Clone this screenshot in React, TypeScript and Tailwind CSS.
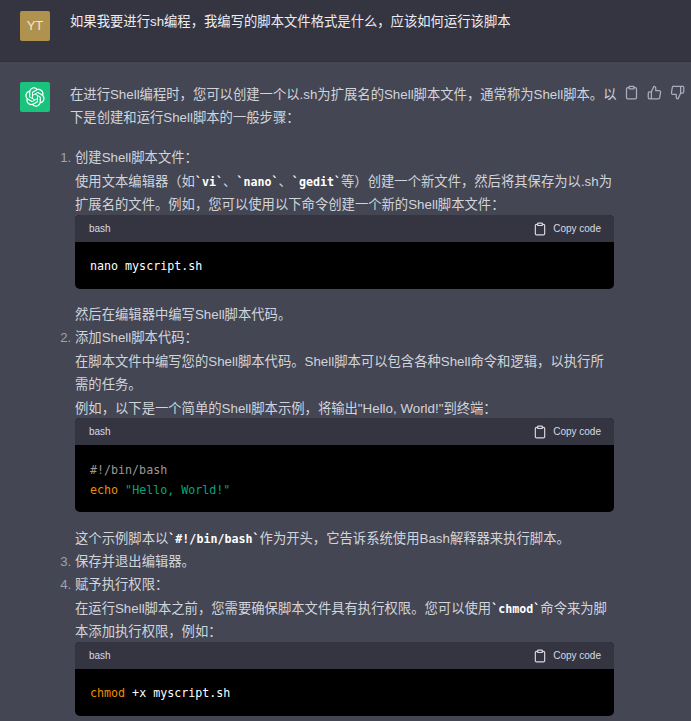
import { Clipboard } from 'lucide-react';
import type { ReactNode } from 'react';

const bodyFont = "font-['Liberation_Sans','Noto_Sans_CJK_SC',sans-serif]";

function OpenAILogo() {
  return (
    <svg viewBox="0 0 41 41" width="20" height="20" fill="none" aria-hidden>
      <path
        fill="currentColor"
        d="M37.5324 16.8707C37.9808 15.5241 38.1363 14.0974 37.9886 12.6859C37.8409 11.2744 37.3934 9.91076 36.676 8.68622C35.6126 6.83404 33.9882 5.3676 32.0373 4.4985C30.0864 3.62941 27.9098 3.40259 25.8215 3.85078C24.8796 2.7893 23.7219 1.94125 22.4257 1.36341C21.1295 0.785575 19.7249 0.491269 18.3058 0.500197C16.1708 0.495044 14.0893 1.16803 12.3614 2.42214C10.6335 3.67624 9.34853 5.44666 8.6917 7.47815C7.30085 7.76286 5.98686 8.3414 4.8377 9.17505C3.68854 10.0087 2.73073 11.0782 2.02839 12.312C0.956464 14.1591 0.498905 16.2988 0.721698 18.4228C0.944492 20.5467 1.83612 22.5449 3.268 24.1293C2.81966 25.4759 2.66413 26.9026 2.81182 28.3141C2.95951 29.7256 3.40701 31.0892 4.12437 32.3138C5.18791 34.1659 6.8123 35.6322 8.76321 36.5013C10.7141 37.3704 12.8907 37.5973 14.9789 37.1492C15.9208 38.2107 17.0786 39.0587 18.3747 39.6366C19.6709 40.2144 21.0755 40.5087 22.4946 40.4998C24.6307 40.5054 26.7133 39.8321 28.4418 38.5772C30.1704 37.3223 31.4556 35.5506 32.1119 33.5179C33.5027 33.2332 34.8167 32.6547 35.9659 31.821C37.115 30.9874 38.0728 29.9178 38.7752 28.684C39.8458 26.8371 40.3023 24.6979 40.0789 22.5748C39.8556 20.4517 38.9639 18.4544 37.5324 16.8707ZM22.4978 37.8849C20.7443 37.8874 19.0459 37.2733 17.6994 36.1501C17.7601 36.117 17.8666 36.0586 17.936 36.0161L25.9004 31.4156C26.1003 31.3019 26.2663 31.137 26.3813 30.9378C26.4964 30.7386 26.5563 30.5124 26.5549 30.2825V19.0542L29.9213 20.998C29.9389 21.0068 29.9541 21.0198 29.9656 21.0359C29.977 21.052 29.9842 21.0707 29.9867 21.0902V30.3889C29.9842 32.375 29.1946 34.2791 27.7909 35.6841C26.3872 37.0892 24.4838 37.8806 22.4978 37.8849ZM6.39227 31.0064C5.51397 29.4888 5.19742 27.7107 5.49804 25.9832C5.55718 26.0187 5.66048 26.0818 5.73461 26.1244L13.699 30.7248C13.8975 30.8408 14.1233 30.902 14.3532 30.902C14.583 30.902 14.8088 30.8408 15.0073 30.7248L24.731 25.1103V28.9979C24.7321 29.0177 24.7283 29.0376 24.7199 29.0556C24.7115 29.0736 24.6988 29.0893 24.6829 29.1012L16.6317 33.7497C14.9096 34.7416 12.8643 35.0097 10.9447 34.4954C9.02506 33.9811 7.38785 32.7263 6.39227 31.0064ZM4.29707 13.6194C5.17156 12.0998 6.55279 10.9364 8.19885 10.3327C8.19885 10.4013 8.19491 10.5228 8.19491 10.6071V19.808C8.19351 20.0378 8.25334 20.2638 8.36823 20.4629C8.48312 20.6619 8.64893 20.8267 8.84863 20.9404L18.5723 26.5542L15.206 28.4979C15.1894 28.5089 15.1703 28.5155 15.1505 28.5173C15.1307 28.5191 15.1107 28.516 15.0924 28.5082L7.04046 23.8557C5.32135 22.8601 4.06716 21.2235 3.55289 19.3046C3.03862 17.3858 3.30624 15.3413 4.29707 13.6194ZM31.955 20.0556L22.2312 14.4411L25.5976 12.4981C25.6142 12.4872 25.6333 12.4805 25.6531 12.4787C25.6729 12.4769 25.6928 12.4801 25.7111 12.4879L33.7631 17.1364C34.9967 17.849 36.0017 18.8982 36.6606 20.1613C37.3194 21.4244 37.6047 22.849 37.4832 24.2684C37.3617 25.6878 36.8382 27.0432 35.9743 28.1759C35.1103 29.3086 33.9415 30.1717 32.6047 30.6641C32.6047 30.5947 32.6047 30.4733 32.6047 30.3889V21.188C32.6066 20.9586 32.5474 20.7328 32.4332 20.5338C32.319 20.3348 32.154 20.1698 31.955 20.0556ZM35.3055 15.0128C35.2464 14.9765 35.1431 14.9142 35.069 14.8717L27.1045 10.2712C26.906 10.1554 26.6803 10.0943 26.4504 10.0943C26.2206 10.0943 25.9948 10.1554 25.7963 10.2712L16.0726 15.8858V11.9982C16.0715 11.9783 16.0753 11.9585 16.0837 11.9405C16.0921 11.9225 16.1048 11.9068 16.1207 11.8949L24.1719 7.25025C25.4053 6.53903 26.8158 6.19376 28.2383 6.25482C29.6608 6.31589 31.0364 6.78077 32.2044 7.59508C33.3723 8.40939 34.2842 9.53945 34.8334 10.8531C35.3826 12.1667 35.5464 13.6095 35.3055 15.0128ZM14.2424 21.9419L10.8752 19.9981C10.8576 19.9893 10.8423 19.9763 10.8309 19.9602C10.8195 19.9441 10.8122 19.9254 10.8098 19.9058V10.6071C10.8107 9.18295 11.2173 7.78848 11.9819 6.58696C12.7466 5.38544 13.8377 4.42659 15.1275 3.82264C16.4173 3.21869 17.8524 2.99464 19.2649 3.1767C20.6775 3.35876 22.0089 3.93941 23.1034 4.85067C23.0427 4.88379 22.937 4.94215 22.8668 4.98473L14.9024 9.58517C14.7025 9.69878 14.5366 9.86356 14.4215 10.0626C14.3065 10.2616 14.2466 10.4877 14.2479 10.7175L14.2424 21.9419ZM16.071 17.9991L20.4018 15.4978L24.7325 17.9975V22.9985L20.4018 25.4983L16.071 22.9985V17.9991Z"
      />
    </svg>
  );
}

function ThumbIcon({ down }: { down?: boolean }) {
  return (
    <svg
      viewBox="0 0 24 24"
      width="15"
      height="15"
      fill="none"
      stroke="currentColor"
      strokeWidth="2"
      strokeLinecap="round"
      strokeLinejoin="round"
      aria-hidden
    >
      {down ? (
        <path d="M10 15v4a3 3 0 0 0 3 3l4-9V2H5.72a2 2 0 0 0-2 1.7l-1.38 9a2 2 0 0 0 2 2.3zm7-13h2.67A2.31 2.31 0 0 1 22 4v7a2.31 2.31 0 0 1-2.33 2H17" />
      ) : (
        <path d="M14 9V5a3 3 0 0 0-3-3l-4 9v11h11.28a2 2 0 0 0 2-1.7l1.38-9a2 2 0 0 0-2-2.3zM7 22H4a2 2 0 0 1-2-2v-7a2 2 0 0 1 2-2h3" />
      )}
    </svg>
  );
}

function InlineCode({ children }: { children: string }) {
  return (
    <code className="font-['DejaVu_Sans_Mono',monospace] text-[11.67px] font-bold leading-none text-white">
      `{children}`
    </code>
  );
}

function CodeBlock({ children }: { children: ReactNode }) {
  return (
    <div className="-mt-[2px] mb-[14.5px] overflow-hidden rounded-[5px] bg-black">
      <div className="flex h-[27px] items-center justify-between bg-[#343541] pl-[14px] pr-[13px] pt-px text-[10px] text-[#d9d9e3]">
        <span>bash</span>
        <span className="flex items-center gap-[6px]">
          <Clipboard size={14} strokeWidth={2} />
          Copy code
        </span>
      </div>
      <pre className="px-[15px] pb-[12.5px] pt-[14.5px] font-['DejaVu_Sans_Mono',monospace] text-[11.67px] leading-[20px] text-white">
        {children}
      </pre>
    </div>
  );
}

export default function App() {
  return (
    <div className={`h-[721px] overflow-hidden bg-[#444654] text-[13.33px] leading-[23.4px] text-[#d1d5db] ${bodyFont}`}>
      {/* Question */}
      <div className="flex h-[62px] gap-5 border-b border-[#2f3039] bg-[#343541] pl-5 pt-[11px]">
        <div className="flex h-[30px] w-[30px] items-center justify-center rounded-[2px] bg-[#b0924f] text-[13px] text-[#f0e6d0]">
          YT
        </div>
        <p className="-mt-[1.5px] text-[#ececf1]">如果我要进行sh编程，我编写的脚本文件格式是什么，应该如何运行该脚本</p>
      </div>

      {/* Answer */}
      <div className="flex gap-5 pl-5 pt-5">
        <div className="flex h-[30px] w-[30px] shrink-0 items-center justify-center rounded-[2px] bg-[#19c37d] text-white">
          <OpenAILogo />
        </div>
        <div className="mt-[1px] w-[544px] shrink-0">
          <p className="mb-[16.5px] whitespace-nowrap">
            在进行Shell编程时，您可以创建一个以.sh为扩展名的Shell脚本文件，通常称为Shell脚本。以
            <br />
            下是创建和运行Shell脚本的一般步骤：
          </p>
          <ol className="list-decimal pl-[5px] marker:text-[#9ca3af]">
            <li>
              创建Shell脚本文件：
              <br />
              使用文本编辑器（如<InlineCode>vi</InlineCode>、<InlineCode>nano</InlineCode>、<InlineCode>gedit</InlineCode>
              等）创建一个新文件，然后将其保存为以.sh为扩展名的文件。例如，您可以使用以下命令创建一个新的Shell脚本文件：
              <CodeBlock>nano myscript.sh</CodeBlock>
              然后在编辑器中编写Shell脚本代码。
            </li>
            <li>
              添加Shell脚本代码：
              <br />
              在脚本文件中编写您的Shell脚本代码。Shell脚本可以包含各种Shell命令和逻辑，以执行所需的任务。
              <br />
              例如，以下是一个简单的Shell脚本示例，将输出"Hello, World!"到终端：
              <CodeBlock>
                <span className="text-[#999999]">#!/bin/bash</span>
                {'\n'}
                <span className="text-[#ef8d00]">echo</span> <span className="text-[#00a67d]">"Hello, World!"</span>
              </CodeBlock>
              这个示例脚本以<InlineCode>#!/bin/bash</InlineCode>作为开头，它告诉系统使用Bash解释器来执行脚本。
            </li>
            <li>保存并退出编辑器。</li>
            <li>
              赋予执行权限：
              <br />
              在运行Shell脚本之前，您需要确保脚本文件具有执行权限。您可以使用<InlineCode>chmod</InlineCode>
              命令来为脚本添加执行权限，例如：
              <CodeBlock>
                <span className="text-[#ef8d00]">chmod</span> +x myscript.sh
              </CodeBlock>
            </li>
          </ol>
        </div>
        <div className="-ml-[10px] flex h-[20px] items-center gap-[8px] text-[#acacbe]">
          <Clipboard size={15} strokeWidth={2} />
          <ThumbIcon />
          <ThumbIcon down />
        </div>
      </div>
    </div>
  );
}
